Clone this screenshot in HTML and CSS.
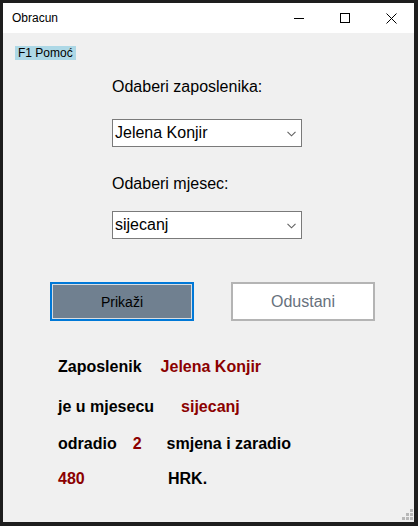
FILE: index.html
```html
<!DOCTYPE html>
<html>
<head>
<meta charset="utf-8">
<link rel="stylesheet" href="styles.css">
</head>
<body>
<div class="window">
  <div class="titlebar">
    <span class="title">Obracun</span>
    <div class="caption">
      <div class="cap-btn"><svg width="10" height="10" viewBox="0 0 10 10"><line x1="0" y1="5.5" x2="10" y2="5.5" stroke="#000" stroke-width="1"/></svg></div>
      <div class="cap-btn"><svg width="10" height="10" viewBox="0 0 10 10"><rect x="0.5" y="0.5" width="9" height="9" fill="none" stroke="#000" stroke-width="1"/></svg></div>
      <div class="cap-btn"><svg width="11" height="11" viewBox="0 0 11 11"><path d="M0.5 0.5 L10.5 10.5 M10.5 0.5 L0.5 10.5" stroke="#000" stroke-width="1" fill="none"/></svg></div>
    </div>
  </div>
  <div class="client">
    <div class="help"><span class="help-label">F1 Pomoć</span></div>
    <div class="form">
      <div class="label lbl1">Odaberi zaposlenika:</div>
      <div class="combo combo1"><span>Jelena Konjir</span><svg class="chev" width="9" height="6" viewBox="0 0 9 6"><path d="M0.5 0.8 L4.5 4.8 L8.5 0.8" fill="none" stroke="#606060" stroke-width="1.1"/></svg></div>
      <div class="label lbl2">Odaberi mjesec:</div>
      <div class="combo combo2"><span>sijecanj</span><svg class="chev" width="9" height="6" viewBox="0 0 9 6"><path d="M0.5 0.8 L4.5 4.8 L8.5 0.8" fill="none" stroke="#606060" stroke-width="1.1"/></svg></div>
    </div>
    <div class="buttons">
      <div class="btn btn-primary"><span>Prikaži</span></div>
      <div class="btn btn-cancel">Odustani</div>
    </div>
    <div class="result">
      <div class="row r1"><span>Zaposlenik</span><span class="val m1">Jelena Konjir</span></div>
      <div class="row r2"><span>je u mjesecu</span><span class="val m2">sijecanj</span></div>
      <div class="row r3"><span>odradio</span><span class="val m3">2</span><span class="m4">smjena i zaradio</span></div>
      <div class="row r4"><span class="val w480">480</span><span>HRK.</span></div>
    </div>
    <div class="grip">
      <i style="left:8px;top:0"></i>
      <i style="left:4px;top:4px"></i><i style="left:8px;top:4px"></i>
      <i style="left:0;top:8px"></i><i style="left:4px;top:8px"></i><i style="left:8px;top:8px"></i>
    </div>
  </div>
</div>
</body>
</html>
```

FILE: styles.css
```css
* { box-sizing: border-box; }
html, body { margin: 0; padding: 0; background: #1e1e1e; }
body { width: 418px; height: 526px; overflow: hidden; font-family: "Liberation Sans", Arial, sans-serif; }

.window {
  margin: 3px 0 0 3px;
  width: 411px;
  height: 519px;
  background: #f0f0f0;
  display: flex;
  flex-direction: column;
}

.titlebar {
  height: 30px;
  background: #ffffff;
  display: flex;
  align-items: center;
  justify-content: space-between;
}
.title { font-size: 12px; color: #000; padding-left: 9px; }
.caption { display: flex; height: 30px; }
.cap-btn { width: 46px; height: 30px; display: flex; align-items: center; justify-content: center; }

.client { position: relative; flex: 1; }

.help { padding: 10px 0 0 12px; height: 24px; }
.help-label {
  display: inline-block;
  background: #add8e6;
  font-size: 12px;
  line-height: 14px;
  height: 14px;
  padding: 0 3px;
  color: #000;
}

.form { padding-left: 109px; display: flex; flex-direction: column; }
.label { font-size: 16px; line-height: 18px; color: #000; }
.lbl1 { margin-top: 21px; }
.lbl2 { margin-top: 28px; }
.combo {
  width: 190px;
  height: 28px;
  background: #fff;
  border: 1px solid #7a7a7a;
  font-size: 16px;
  line-height: 26px;
  padding-left: 2px;
  display: flex;
  justify-content: space-between;
  align-items: center;
  color: #000;
}
.combo span { line-height: 26px; }
.chev { margin-right: 5px; margin-top: 1px; }
.combo1 { margin-top: 23px; }
.combo2 { margin-top: 18px; }

.buttons { display: flex; gap: 37px; padding-left: 47px; margin-top: 43px; }
.btn {
  width: 144px;
  height: 39px;
  display: flex;
  align-items: center;
  justify-content: center;
}
.btn-primary {
  border: 2px solid #0078d7;
  background: #708090;
  box-shadow: inset 0 0 0 1px #d8dde2;
  font-size: 14px;
  color: #000;
}
.btn-cancel {
  border: 2px solid #b4b4b4;
  background: #fff;
  font-size: 16px;
  color: #67717d;
}

.result { padding-left: 55px; margin-top: 37px; font-weight: bold; font-size: 16px; color: #000; }
.row { display: flex; line-height: 18px; height: 18px; }
.r2 { margin-top: 22px; }
.r3 { margin-top: 19px; }
.r4 { margin-top: 17px; }
.val { color: #8b0000; }
.m1 { margin-left: 19px; }
.m2 { margin-left: 27px; }
.m3 { margin-left: 16px; }
.m4 { margin-left: 25px; }
.w480 { width: 110px; }

.grip { position: absolute; right: 1px; bottom: 2px; width: 11px; height: 11px; }
.grip i { position: absolute; width: 3px; height: 3px; background: #b8b8b8; }
```
